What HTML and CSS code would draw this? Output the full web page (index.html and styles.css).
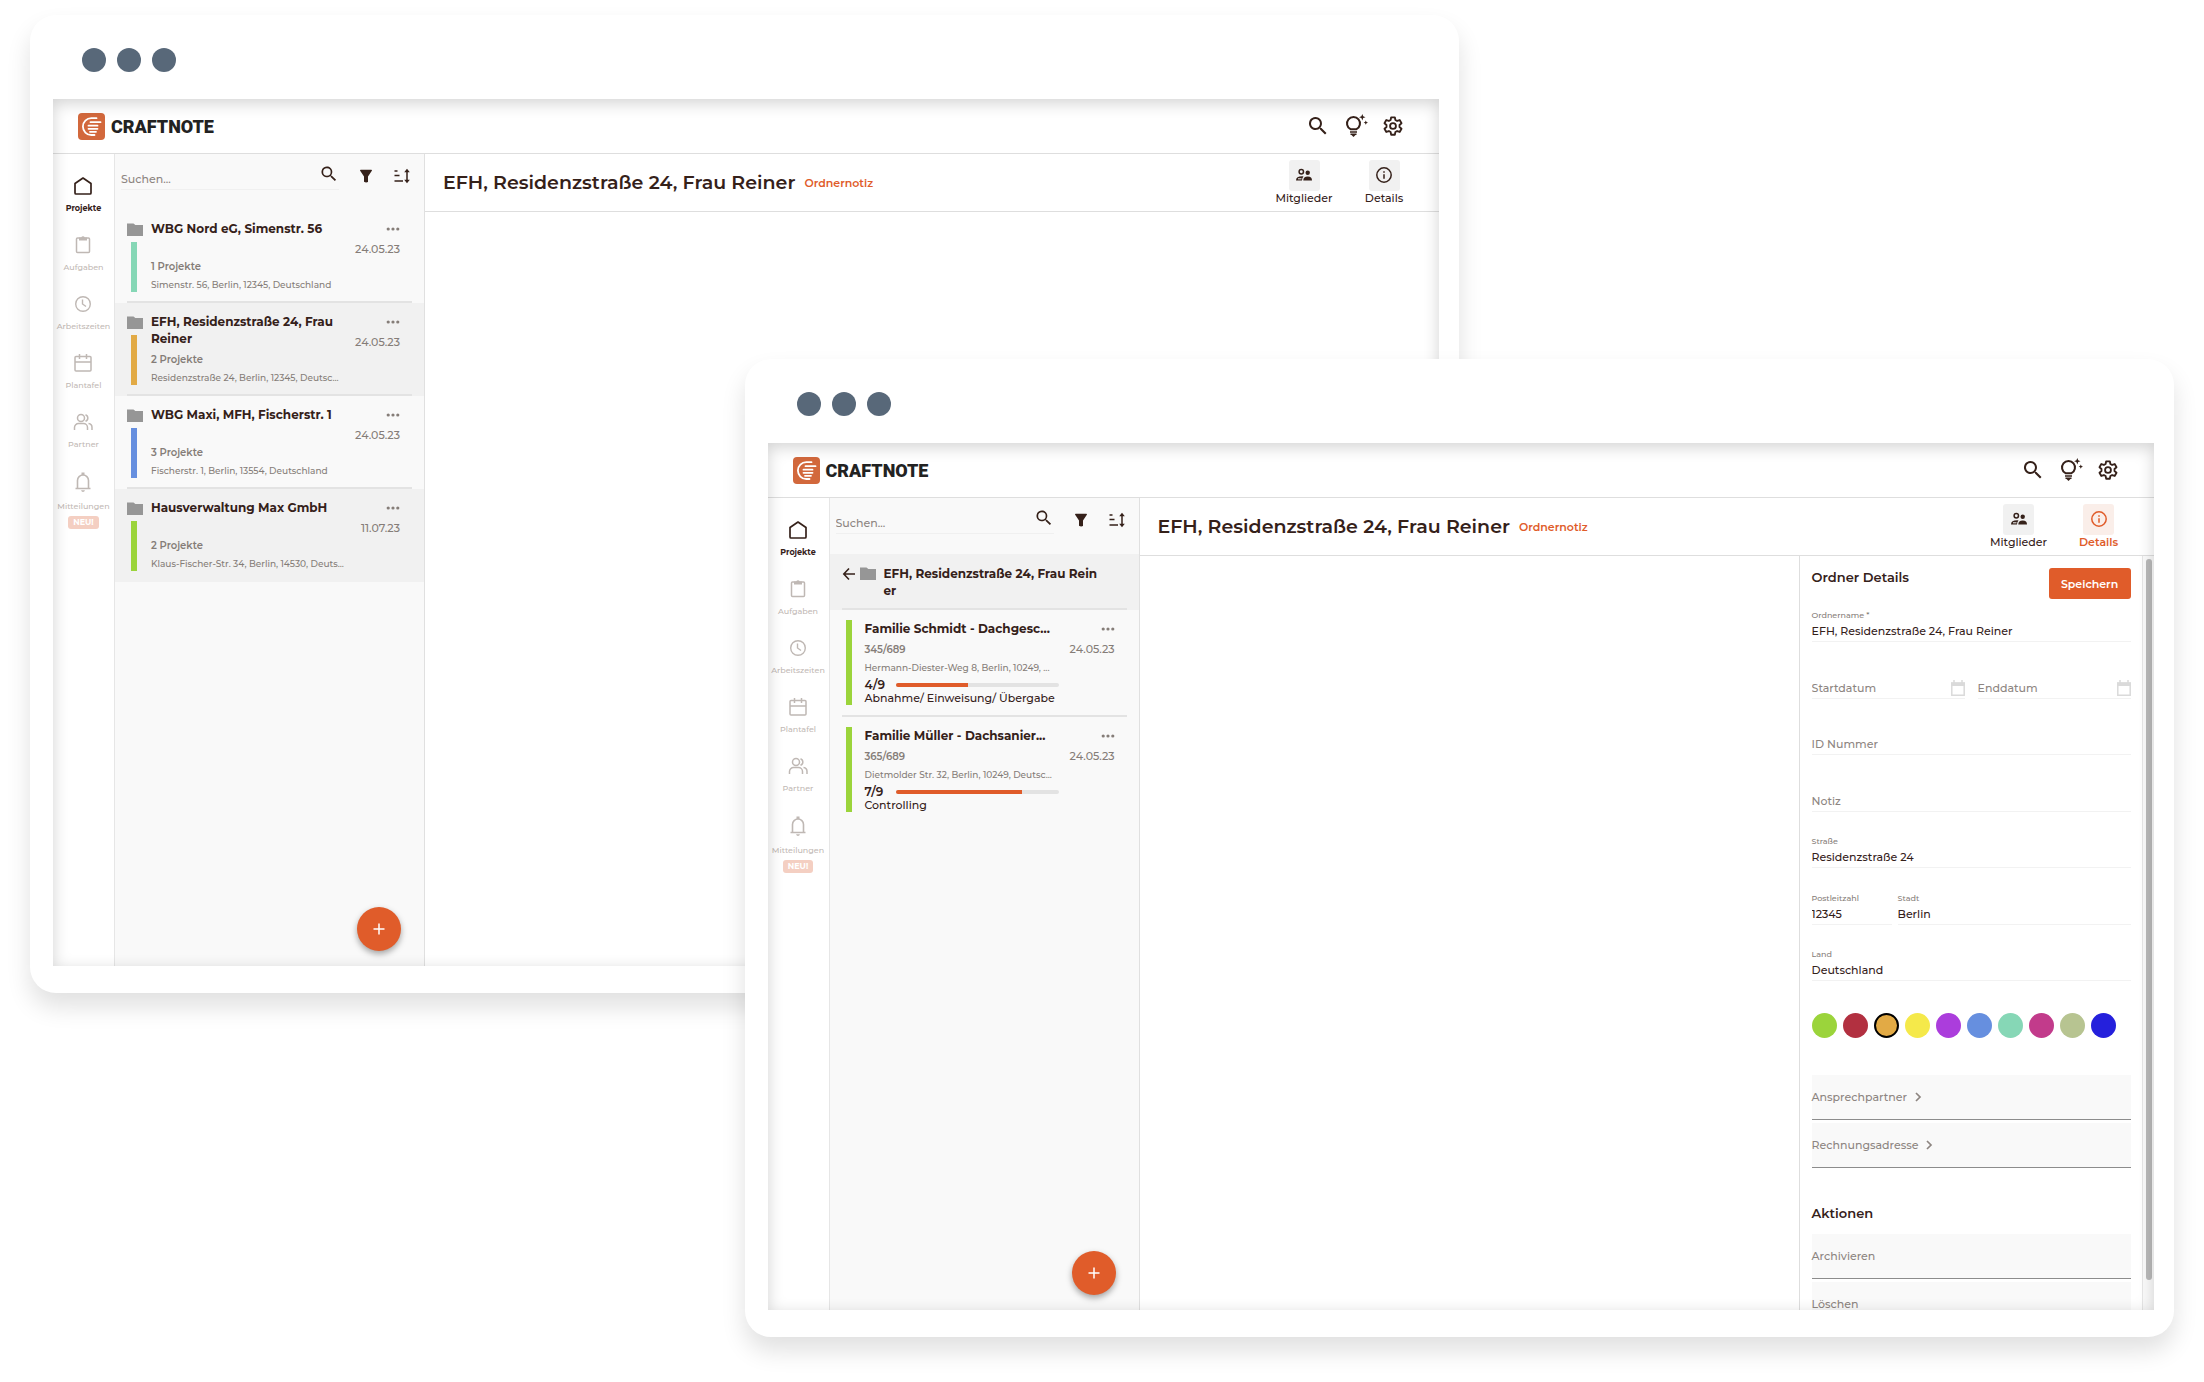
FILE: index.html
```html
<!DOCTYPE html>
<html lang="de">

<head>
    <meta charset="UTF-8">
    <title>Craftnote</title>
    <meta name="viewport" content="width=device-width, initial-scale=1.0">
    <link rel="stylesheet" href="styles.css">
</head>

<body>
    <!-- icon sprite -->
    <svg class="sprite" aria-hidden="true">
        <symbol id="logo" viewBox="0 0 27 27">
            <rect width="27" height="27" rx="4" fill="#d2683c" />
            <g fill="none" stroke="#fff" stroke-linecap="round" stroke-width="1.800">
                <path d="M18.500 5.200h-5.200a8.400 8.400 0 0 0 0 16.800h3.200" />
                <path d="M12.500 9.200h10M10.500 12.700h9M10.500 15.800h9M12 18.800h6" />
            </g>
        </symbol>
        <symbol id="search" viewBox="0 0 24 24">
            <path fill="currentColor" d="M15.5 14h-.8l-.3-.3A6.5 6.5 0 1 0 13.7 14.4l.3.3v.8l5 5 1.5-1.5zm-6 0a4.5 4.5 0 1 1 0-9 4.5 4.5 0 0 1 0 9z" />
        </symbol>
        <symbol id="bulb" viewBox="0 0 24 24">
            <g fill="none" stroke="currentColor" stroke-width="2">
                <path d="M6.5 15.200a6.500 6.500 0 1 1 6 0z" />
                <path d="M6 18h7M6.500 20.300h6" stroke-width="1.500" />
            </g>
            <path fill="currentColor" d="M7.500 21h4l-2 2zM18.300 0l.9 2.300 2.300.9-2.300.9-.9 2.300-.9-2.300-2.300-.9 2.300-.9zM21.800 6.400l.7 1.600 1.500.6-1.500.6-.7 1.600-.7-1.600-1.500-.6 1.500-.6z" />
        </symbol>
        <symbol id="gear" viewBox="0 0 24 24">
            <g fill="none" stroke="currentColor" stroke-width="2" stroke-linejoin="round">
                <circle cx="12" cy="12" r="3.2" />
                <path d="M10 2.500h4l.6 2.900 1.900 1.100 2.800-1 2 3.500-2.200 1.900v2.200l2.200 1.900-2 3.500-2.800-1-1.900 1.100-.6 2.900h-4l-.6-2.900-1.900-1.100-2.800 1-2-3.500 2.200-1.900v-2.200L2.700 9l2-3.500 2.800 1 1.900-1.100z" />
            </g>
        </symbol>
        <symbol id="filter" viewBox="0 0 14 14">
            <path fill="currentColor" d="M1 1.500Q1 .8 1.700.8h10.600q.7 0 .7.7L9 7.500V13q-2 1-4-.2V7.500z" />
        </symbol>
        <symbol id="sort" viewBox="0 0 18 16">
            <path fill="none" stroke="currentColor" stroke-width="1.500" d="M1.500 3h3M1.500 7.500h5M1.500 13h8.500M14 3v10" />
            <path fill="currentColor" d="M14 .8l2.800 3.500h-5.600zM14 15.200l2.800-3.500h-5.600z" />
        </symbol>
        <symbol id="folder" viewBox="0 0 16 13">
            <path fill="#969696" d="M0 .5h6.500L8.300 2H16v11H0z" />
        </symbol>
        <symbol id="dots" viewBox="0 0 14 4">
            <g fill="#857d78">
                <circle cx="2.200" cy="2" r="1.600" />
                <circle cx="7" cy="2" r="1.600" />
                <circle cx="11.800" cy="2" r="1.600" />
            </g>
        </symbol>
        <symbol id="home" viewBox="0 0 24 24">
            <path fill="none" stroke="currentColor" stroke-width="1.700" stroke-linejoin="round" d="M4 9.500L12 4l8 5.500V19a1 1 0 0 1-1 1H5a1 1 0 0 1-1-1z" />
        </symbol>
        <symbol id="clipboard" viewBox="0 0 24 24">
            <rect x="5.500" y="5" width="13" height="14.500" rx="1" fill="none" stroke="currentColor" stroke-width="1.500" />
            <path fill="currentColor" d="M8 4.500h2.200a2 2 0 0 1 3.600 0H16V7.500H8z" />
        </symbol>
        <symbol id="clock" viewBox="0 0 24 24">
            <g fill="none" stroke="currentColor" stroke-width="1.400">
                <circle cx="12" cy="12" r="7.300" />
                <path d="M11.500 7.500V12l3.500 2.500" />
            </g>
        </symbol>
        <symbol id="calendar" viewBox="0 0 24 24">
            <path fill="none" stroke="currentColor" stroke-width="1.500" d="M5 5.500h14a1 1 0 0 1 1 1V19a1 1 0 0 1-1 1H5a1 1 0 0 1-1-1V6.500a1 1 0 0 1 1-1zM4 11h16M8.500 3v5M15.500 3v5" />
        </symbol>
        <symbol id="people" viewBox="0 0 24 24">
            <g fill="none" stroke="currentColor" stroke-width="1.500">
                <circle cx="10" cy="8" r="3.500" />
                <path d="M3.500 20v-2.500a4 4 0 0 1 4-4h5a4 4 0 0 1 4 4V20M14.500 4.700a3.500 3.500 0 0 1 0 6.600M17.500 13.600a4 4 0 0 1 3.500 4V20" />
            </g>
        </symbol>
        <symbol id="bell" viewBox="0 0 24 24">
            <path fill="none" stroke="currentColor" stroke-width="1.600" stroke-linejoin="round" d="M4.500 18.500h15M6.500 18.500v-8a5.500 5.500 0 0 1 11 0v8" />
            <path fill="currentColor" d="M10.500 2.500h3V5h-3zM10 20.200h4q-.5 1.800-2 1.800t-2-1.800z" />
        </symbol>
        <symbol id="members" viewBox="0 0 18 14">
            <circle cx="6.300" cy="3.700" r="2.200" fill="none" stroke="currentColor" stroke-width="1.500" />
            <circle cx="12.700" cy="4.700" r="2.200" fill="currentColor" />
            <path fill="currentColor" d="M1 12.500Q1 8.200 7.500 8.300L8.500 8.600Q7 10 7 12.500zM8.300 12.500q0-4 4.400-4t4.300 4z" />
            <path stroke="#f1f1f1" d="M3 10.800h3.500" />
        </symbol>
        <symbol id="info" viewBox="0 0 18 18">
            <circle cx="9" cy="9" r="7.200" fill="none" stroke="currentColor" stroke-width="1.500" />
            <path fill="none" stroke="currentColor" stroke-width="1.500" d="M9 8.200v4.600M9 5.200v1.600" />
        </symbol>
        <symbol id="back" viewBox="0 0 14 14">
            <path fill="none" stroke="currentColor" stroke-width="1.600" d="M7 1.500L1.800 7 7 12.500M1.800 7H13" />
        </symbol>
        <symbol id="date" viewBox="0 0 14 16">
            <path fill="none" stroke="#dadada" stroke-width="1.500" d="M.8 3h12.400v12.200H.8zM3 0v3M11 0v3" />
            <path fill="#dadada" d="M0 2.500h14v3.500H0z" />
        </symbol>
        <symbol id="chevron" viewBox="0 0 8 10">
            <path fill="none" stroke="currentColor" stroke-width="1.700" d="M2 1l4 4-4 4" />
        </symbol>
        <symbol id="plus" viewBox="0 0 12 12">
            <path stroke="#fff" stroke-width="1.500" d="M6 .5v11M.5 6h11" />
        </symbol>
    </svg>

    <main class="stage">
        <!-- folder overview -->
        <section class="window window-back">
            <div class="window-bar"><span></span><span></span><span></span></div>
            <div class="screen">
                <header class="app-header">
                    <a class="brand" href="#"><svg width="27" height="27"><use href="#logo" /></svg>CRAFTNOTE</a>
                    <div class="header-tools">
                        <button aria-label="Suche"><svg width="24" height="24"><use href="#search" /></svg></button>
                        <button aria-label="Tipps"><svg width="24" height="24"><use href="#bulb" /></svg></button>
                        <button aria-label="Einstellungen"><svg width="22" height="22"><use href="#gear" /></svg></button>
                    </div>
                </header>
                <div class="app-body">
                    <nav class="sidebar">
                        <a class="active" href="#"><svg><use href="#home" /></svg>Projekte</a>
                        <a href="#"><svg><use href="#clipboard" /></svg>Aufgaben</a>
                        <a href="#"><svg><use href="#clock" /></svg>Arbeitszeiten</a>
                        <a href="#"><svg><use href="#calendar" /></svg>Plantafel</a>
                        <a href="#"><svg><use href="#people" /></svg>Partner</a>
                        <a href="#"><svg><use href="#bell" /></svg>Mitteilungen<b class="badge">NEU!</b></a>
                    </nav>
                    <section class="list">
                        <div class="list-tools">
                            <div class="search">
                                <input type="text" placeholder="Suchen..." aria-label="Suchen">
                                <button aria-label="Suche starten"><svg width="20" height="20"><use href="#search" /></svg></button>
                            </div>
                            <button aria-label="Filter"><svg width="14" height="14"><use href="#filter" /></svg></button>
                            <button aria-label="Sortieren"><svg width="18" height="16"><use href="#sort" /></svg></button>
                        </div>
                        <article class="folder">
                            <div class="mark"><svg width="16" height="13"><use href="#folder" /></svg><i class="bar mint"></i></div>
                            <div class="info">
                                <h3>WBG Nord eG, Simenstr. 56</h3>
                                <p class="count">1 Projekte</p>
                                <p class="address">Simenstr. 56, Berlin, 12345, Deutschland</p>
                            </div>
                            <div class="meta"><button aria-label="Mehr"><svg width="14" height="4"><use href="#dots" /></svg></button><time>24.05.23</time></div>
                        </article>
                        <article class="folder shaded">
                            <div class="mark"><svg width="16" height="13"><use href="#folder" /></svg><i class="bar amber"></i></div>
                            <div class="info">
                                <h3>EFH, Residenzstraße 24, Frau Reiner</h3>
                                <p class="count">2 Projekte</p>
                                <p class="address">Residenzstraße 24, Berlin, 12345, Deutsc...</p>
                            </div>
                            <div class="meta"><button aria-label="Mehr"><svg width="14" height="4"><use href="#dots" /></svg></button><time>24.05.23</time></div>
                        </article>
                        <article class="folder">
                            <div class="mark"><svg width="16" height="13"><use href="#folder" /></svg><i class="bar blue"></i></div>
                            <div class="info">
                                <h3>WBG Maxi, MFH, Fischerstr. 1</h3>
                                <p class="count">3 Projekte</p>
                                <p class="address">Fischerstr. 1, Berlin, 13554, Deutschland</p>
                            </div>
                            <div class="meta"><button aria-label="Mehr"><svg width="14" height="4"><use href="#dots" /></svg></button><time>24.05.23</time></div>
                        </article>
                        <article class="folder shaded last">
                            <div class="mark"><svg width="16" height="13"><use href="#folder" /></svg><i class="bar green"></i></div>
                            <div class="info">
                                <h3>Hausverwaltung Max GmbH</h3>
                                <p class="count">2 Projekte</p>
                                <p class="address">Klaus-Fischer-Str. 34, Berlin, 14530, Deuts...</p>
                            </div>
                            <div class="meta"><button aria-label="Mehr"><svg width="14" height="4"><use href="#dots" /></svg></button><time>11.07.23</time></div>
                        </article>
                        <button class="fab" aria-label="Neu"><svg width="12" height="12"><use href="#plus" /></svg></button>
                    </section>
                    <section class="content">
                        <div class="title-bar">
                            <h1>EFH, Residenzstraße 24, Frau Reiner</h1>
                            <a class="note" href="#">Ordnernotiz</a>
                            <div class="title-actions">
                                <button><span><svg width="18" height="14"><use href="#members" /></svg></span>Mitglieder</button>
                                <button><span><svg width="18" height="18"><use href="#info" /></svg></span>Details</button>
                            </div>
                        </div>
                    </section>
                </div>
            </div>
        </section>

        <!-- folder opened, details panel on the right -->
        <section class="window window-front">
            <div class="window-bar"><span></span><span></span><span></span></div>
            <div class="screen">
                <header class="app-header">
                    <a class="brand" href="#"><svg width="27" height="27"><use href="#logo" /></svg>CRAFTNOTE</a>
                    <div class="header-tools">
                        <button aria-label="Suche"><svg width="24" height="24"><use href="#search" /></svg></button>
                        <button aria-label="Tipps"><svg width="24" height="24"><use href="#bulb" /></svg></button>
                        <button aria-label="Einstellungen"><svg width="22" height="22"><use href="#gear" /></svg></button>
                    </div>
                </header>
                <div class="app-body">
                    <nav class="sidebar">
                        <a class="active" href="#"><svg><use href="#home" /></svg>Projekte</a>
                        <a href="#"><svg><use href="#clipboard" /></svg>Aufgaben</a>
                        <a href="#"><svg><use href="#clock" /></svg>Arbeitszeiten</a>
                        <a href="#"><svg><use href="#calendar" /></svg>Plantafel</a>
                        <a href="#"><svg><use href="#people" /></svg>Partner</a>
                        <a href="#"><svg><use href="#bell" /></svg>Mitteilungen<b class="badge">NEU!</b></a>
                    </nav>
                    <section class="list">
                        <div class="list-tools">
                            <div class="search">
                                <input type="text" placeholder="Suchen..." aria-label="Suchen">
                                <button aria-label="Suche starten"><svg width="20" height="20"><use href="#search" /></svg></button>
                            </div>
                            <button aria-label="Filter"><svg width="14" height="14"><use href="#filter" /></svg></button>
                            <button aria-label="Sortieren"><svg width="18" height="16"><use href="#sort" /></svg></button>
                        </div>
                        <div class="parent shaded">
                            <button aria-label="Zurück"><svg width="14" height="14"><use href="#back" /></svg></button>
                            <svg width="16" height="13"><use href="#folder" /></svg>
                            <h3>EFH, Residenzstraße 24, Frau Reiner</h3>
                        </div>
                        <article class="project">
                            <i class="bar green"></i>
                            <div class="info">
                                <h3>Familie Schmidt - Dachgesc...</h3>
                                <p class="count">345/689</p>
                                <p class="address">Hermann-Diester-Weg 8, Berlin, 10249, ...</p>
                                <div class="steps"><b>4/9</b><progress value="4" max="9" aria-label="Fortschritt"></progress></div>
                                <p class="phase">Abnahme/ Einweisung/ Übergabe</p>
                            </div>
                            <div class="meta"><button aria-label="Mehr"><svg width="14" height="4"><use href="#dots" /></svg></button><time>24.05.23</time></div>
                        </article>
                        <article class="project last">
                            <i class="bar green"></i>
                            <div class="info">
                                <h3>Familie Müller - Dachsanier...</h3>
                                <p class="count">365/689</p>
                                <p class="address">Dietmolder Str. 32, Berlin, 10249, Deutsc...</p>
                                <div class="steps"><b>7/9</b><progress value="7" max="9" aria-label="Fortschritt"></progress></div>
                                <p class="phase">Controlling</p>
                            </div>
                            <div class="meta"><button aria-label="Mehr"><svg width="14" height="4"><use href="#dots" /></svg></button><time>24.05.23</time></div>
                        </article>
                        <button class="fab" aria-label="Neu"><svg width="12" height="12"><use href="#plus" /></svg></button>
                    </section>
                    <section class="content">
                        <div class="title-bar">
                            <h1>EFH, Residenzstraße 24, Frau Reiner</h1>
                            <a class="note" href="#">Ordnernotiz</a>
                            <div class="title-actions">
                                <button><span><svg width="18" height="14"><use href="#members" /></svg></span>Mitglieder</button>
                                <button class="on"><span><svg width="18" height="18"><use href="#info" /></svg></span>Details</button>
                            </div>
                        </div>
                        <aside class="details">
                            <form class="details-form">
                                <div class="details-head">
                                    <h2>Ordner Details</h2>
                                    <button class="save" type="button">Speichern</button>
                                </div>
                                <div class="fields">
                                    <div class="field">
                                        <label for="name">Ordnername *</label>
                                        <input id="name" type="text" value="EFH, Residenzstraße 24, Frau Reiner">
                                    </div>
                                    <div class="field-row">
                                        <div class="field date">
                                            <input type="text" placeholder="Startdatum" aria-label="Startdatum">
                                            <svg width="14" height="16"><use href="#date" /></svg>
                                        </div>
                                        <div class="field date">
                                            <input type="text" placeholder="Enddatum" aria-label="Enddatum">
                                            <svg width="14" height="16"><use href="#date" /></svg>
                                        </div>
                                    </div>
                                    <div class="field"><input type="text" placeholder="ID Nummer" aria-label="ID Nummer"></div>
                                    <div class="field"><input type="text" placeholder="Notiz" aria-label="Notiz"></div>
                                    <div class="field">
                                        <label for="street">Straße</label>
                                        <input id="street" type="text" value="Residenzstraße 24">
                                    </div>
                                    <div class="field-row city">
                                        <div class="field">
                                            <label for="zip">Postleitzahl</label>
                                            <input id="zip" type="text" value="12345">
                                        </div>
                                        <div class="field">
                                            <label for="city">Stadt</label>
                                            <input id="city" type="text" value="Berlin">
                                        </div>
                                    </div>
                                    <div class="field">
                                        <label for="country">Land</label>
                                        <input id="country" type="text" value="Deutschland">
                                    </div>
                                </div>
                                <div class="colors">
                                    <input type="radio" name="color" class="green" aria-label="Grün">
                                    <input type="radio" name="color" class="red" aria-label="Rot">
                                    <input type="radio" name="color" class="amber" aria-label="Orange" checked>
                                    <input type="radio" name="color" class="yellow" aria-label="Gelb">
                                    <input type="radio" name="color" class="purple" aria-label="Lila">
                                    <input type="radio" name="color" class="blue" aria-label="Blau">
                                    <input type="radio" name="color" class="mint" aria-label="Mint">
                                    <input type="radio" name="color" class="pink" aria-label="Pink">
                                    <input type="radio" name="color" class="olive" aria-label="Oliv">
                                    <input type="radio" name="color" class="navy" aria-label="Dunkelblau">
                                </div>
                                <div class="rows">
                                    <button type="button">Ansprechpartner<svg width="8" height="10"><use href="#chevron" /></svg></button>
                                    <button type="button">Rechnungsadresse<svg width="8" height="10"><use href="#chevron" /></svg></button>
                                </div>
                                <h2>Aktionen</h2>
                                <div class="rows">
                                    <button type="button">Archivieren</button>
                                    <button type="button">Löschen</button>
                                </div>
                            </form>
                            <div class="scroll"><i></i></div>
                        </aside>
                    </section>
                </div>
            </div>
        </section>
    </main>
</body>

</html>
```
FILE: styles.css
```css
* {
    box-sizing: border-box;
}

body {
    margin: 0;
    background: #fff;
    color: #35211a;
    font-family: Montserrat, Inter, sans-serif;
    font-size: 11px;
    font-weight: 500;
}

h1,
h2,
h3,
p {
    margin: 0;
}

a {
    color: inherit;
    text-decoration: none;
}

button {
    display: inline-flex;
    align-items: center;
    justify-content: center;
    padding: 0;
    border: none;
    background: none;
    color: inherit;
    font: inherit;
    cursor: pointer;
}

input {
    border: none;
    outline: none;
    background: none;
    color: inherit;
    font: inherit;
}

input::placeholder {
    color: #8d8581;
    opacity: 1;
}

svg {
    display: block;
    flex: none;
}

.sprite {
    position: absolute;
    width: 0;
    height: 0;
}

.stage {
    position: relative;
    height: 100vh;
    overflow: hidden;
}

/* windows */
.window {
    position: absolute;
    display: flex;
    flex-direction: column;
    width: 64.84%;
    height: 70.77%;
    padding: 0 20px 27px 23px;
    border-radius: 26px;
    background: #fff;
    box-shadow: 0 14px 24px rgba(0, 0, 0, .12);
}

.window-back {
    left: 1.36%;
    top: 1.1%;
}

.window-front {
    left: 33.78%;
    top: 25.98%;
}

.window-bar {
    display: flex;
    align-items: center;
    gap: 11px;
    flex: none;
    height: 84px;
    padding: 6px 29px 0;
}

.window-bar span {
    width: 24px;
    height: 24px;
    border-radius: 50%;
    background: #586879;
}

.screen {
    position: relative;
    display: flex;
    flex-direction: column;
    flex: 1;
    min-height: 0;
    overflow: hidden;
}

.screen::after {
    content: "";
    position: absolute;
    inset: 0;
    box-shadow: inset 0 4px 16px rgba(0, 0, 0, .18);
    pointer-events: none;
}

/* app header */
.app-header {
    display: flex;
    align-items: center;
    justify-content: space-between;
    flex: none;
    height: 55px;
    padding: 0 35px 0 25px;
    border-bottom: 1px solid #dedede;
}

.brand {
    display: flex;
    align-items: center;
    gap: 6px;
    color: #222;
    font-family: Roboto, sans-serif;
    font-size: 18px;
    font-weight: 900;
}

.header-tools {
    display: flex;
    align-items: center;
    gap: 14px;
}

.app-body {
    display: flex;
    flex: 1;
    min-height: 0;
}

/* sidebar */
.sidebar {
    display: flex;
    flex-direction: column;
    align-items: center;
    gap: 18px;
    flex: none;
    width: 62px;
    padding-top: 20px;
    border-right: 1px solid #e6e6e6;
}

.sidebar a {
    display: flex;
    flex-direction: column;
    align-items: center;
    gap: 3px;
    color: #bfb8b4;
    font-size: 8px;
    line-height: 14px;
}

.sidebar svg {
    width: 24px;
    height: 24px;
}

.sidebar a:last-child svg {
    margin: 1px 0 2px;
}

.sidebar .active {
    color: #35211a;
    font-weight: 700;
}

.badge {
    padding: 0 5px;
    border-radius: 3px;
    background: #f4cfc2;
    color: #fff;
    line-height: 13px;
}

/* list column */
.list {
    position: relative;
    flex: none;
    width: 310px;
    border-right: 1px solid #e0e0e0;
    background: #f9f9f9;
}

.list-tools {
    display: flex;
    align-items: center;
    gap: 20px;
    height: 56px;
    padding: 0 13px 12px 6px;
}

.search {
    display: flex;
    flex: 1;
    height: 26px;
    margin-top: 2px;
    border-bottom: 1px solid #f0f0f0;
}

.search input {
    flex: 1;
    min-width: 0;
    padding: 4px 0 0;
}

.search button {
    align-self: flex-start;
}

.shaded {
    background: #f1f1f1;
}

.folder,
.project {
    position: relative;
    display: grid;
    padding: 10px 24px 0 12px;
}

.folder {
    grid-template-columns: 24px 1fr 50px;
    height: 93px;
}

.project {
    grid-template-columns: 19px 1fr 56px;
    height: 107px;
    padding-left: 16px;
}

/* divider line under an entry */
.folder::after,
.project::after,
.parent::after {
    content: "";
    position: absolute;
    left: 12px;
    right: 12px;
    bottom: 0;
    height: 2px;
    background: #e3e3e3;
}

.last::after {
    display: none;
}

.mark {
    display: flex;
    flex-direction: column;
    gap: 6px;
    padding-top: 3px;
}

.bar {
    width: 6px;
    height: 50px;
    margin-left: 4px;
}

.project .bar {
    height: 85px;
    margin-left: 0;
}

.info {
    min-width: 0;
}

.list h3 {
    font-size: 12px;
    font-weight: 700;
    line-height: 17px;
}

.folder h3 {
    height: 39px;
}

.count {
    color: #857d78;
    font-size: 10px;
    font-weight: 600;
    line-height: 16px;
}

.address {
    color: #857d78;
    font-size: 9px;
    line-height: 20px;
    white-space: nowrap;
}

.meta {
    display: flex;
    flex-direction: column;
    align-items: flex-end;
    gap: 4px;
    color: #857d78;
    line-height: 16px;
}

.meta button {
    height: 17px;
}

.parent {
    position: relative;
    display: flex;
    align-items: flex-start;
    height: 56px;
    padding: 11px 36px 0 12px;
}

.parent svg {
    margin: 2px 4px 0 0;
}

.parent h3 {
    margin-left: 4px;
    word-break: break-all;
}

.project h3 {
    margin-bottom: 5px;
    white-space: nowrap;
}

.steps {
    display: flex;
    align-items: center;
    justify-content: space-between;
    font-size: 12px;
    line-height: 13px;
}

.steps b {
    font-weight: 600;
}

.steps progress {
    width: 163px;
    height: 4px;
    border: none;
    border-radius: 2px;
    overflow: hidden;
    appearance: none;
}

.steps progress::-webkit-progress-bar {
    background: #e3e3e3;
}

.steps progress::-webkit-progress-value {
    background: #e05c2a;
}

.phase {
    line-height: 15px;
}

.fab {
    position: absolute;
    right: 23px;
    bottom: 15px;
    width: 44px;
    height: 44px;
    border-radius: 50%;
    background: #e05c2a;
    box-shadow: 0 3px 6px rgba(0, 0, 0, .35);
}

/* main content */
.content {
    display: flex;
    flex-direction: column;
    flex: 1;
    min-width: 0;
}

.title-bar {
    display: flex;
    align-items: center;
    flex: none;
    height: 58px;
    padding: 0 22px 0 18px;
    border-bottom: 1px solid #dedede;
}

.title-bar h1 {
    font-size: 19px;
    font-weight: 600;
}

.note {
    margin-left: 9px;
    color: #e05c2a;
    font-weight: 600;
}

.title-actions {
    display: flex;
    gap: 14px;
    margin-left: auto;
}

.title-actions button {
    flex-direction: column;
    width: 66px;
    line-height: 15px;
}

.title-actions span {
    display: grid;
    place-items: center;
    width: 31px;
    height: 31px;
    border-radius: 3px;
    background: #f1f1f1;
}

.title-actions .on {
    color: #e05c2a;
    font-weight: 600;
}

.title-actions .on span {
    background: #faeee9;
}

/* details panel */
.details {
    display: flex;
    flex: 1;
    width: 355px;
    min-height: 0;
    margin-left: auto;
    border-left: 1px solid #dedede;
}

.details-form {
    flex: 1;
    overflow: hidden;
    padding: 12px 11px 0 12px;
}

.details h2 {
    font-size: 13px;
    font-weight: 600;
    line-height: 18px;
}

.details-head {
    display: flex;
    align-items: flex-start;
    justify-content: space-between;
    margin-bottom: 11px;
}

.save {
    width: 82px;
    height: 31px;
    border-radius: 3px;
    background: #e05c2a;
    color: #fff;
    font-weight: 600;
}

.fields {
    display: flex;
    flex-direction: column;
    justify-content: space-between;
    height: 371px;
}

.field {
    display: flex;
    flex-direction: column;
    justify-content: flex-end;
    height: 32px;
    border-bottom: 1px solid #f2f2f2;
}

.field label {
    color: #857d78;
    font-size: 8px;
    line-height: 11px;
}

.field input {
    width: 100%;
    height: 20px;
    padding: 0;
}

.field-row {
    display: grid;
    grid-template-columns: 1fr 1fr;
    gap: 13px;
}

.field-row.city {
    grid-template-columns: 80px 1fr;
    gap: 6px;
}

.field.date {
    flex-direction: row;
    align-items: flex-end;
}

.field.date svg {
    margin-bottom: 2px;
}

.colors {
    display: flex;
    gap: 6px;
    margin: 32px 0 37px;
}

.colors input {
    width: 25px;
    height: 25px;
    margin: 0;
    border-radius: 50%;
    appearance: none;
}

.colors input:checked {
    border: 2px solid #000;
}

.rows {
    display: flex;
    flex-direction: column;
    gap: 3px;
}

.rows + h2 {
    margin: 36px 0 12px;
}

.rows button {
    justify-content: flex-start;
    gap: 7px;
    height: 45px;
    border-bottom: 1px solid #8c8c8c;
    background: #f9f9f9;
    color: #8d8581;
}

.scroll {
    flex: none;
    width: 12px;
    padding: 3px 2px 0 3px;
    border-left: 1px solid #e6e6e6;
    background: #fafafa;
}

.scroll i {
    display: block;
    height: 96%;
    border-radius: 3px;
    background: #b9b9b9;
}

/* folder colors */
.green {
    background: #9bd43b;
}

.red {
    background: #b23040;
}

.amber {
    background: #e2aa45;
}

.yellow {
    background: #f5e94a;
}

.purple {
    background: #ab3ddc;
}

.blue {
    background: #668fdf;
}

.mint {
    background: #86d7b6;
}

.pink {
    background: #c23b8b;
}

.olive {
    background: #b7c491;
}

.navy {
    background: #2520dc;
}
```
